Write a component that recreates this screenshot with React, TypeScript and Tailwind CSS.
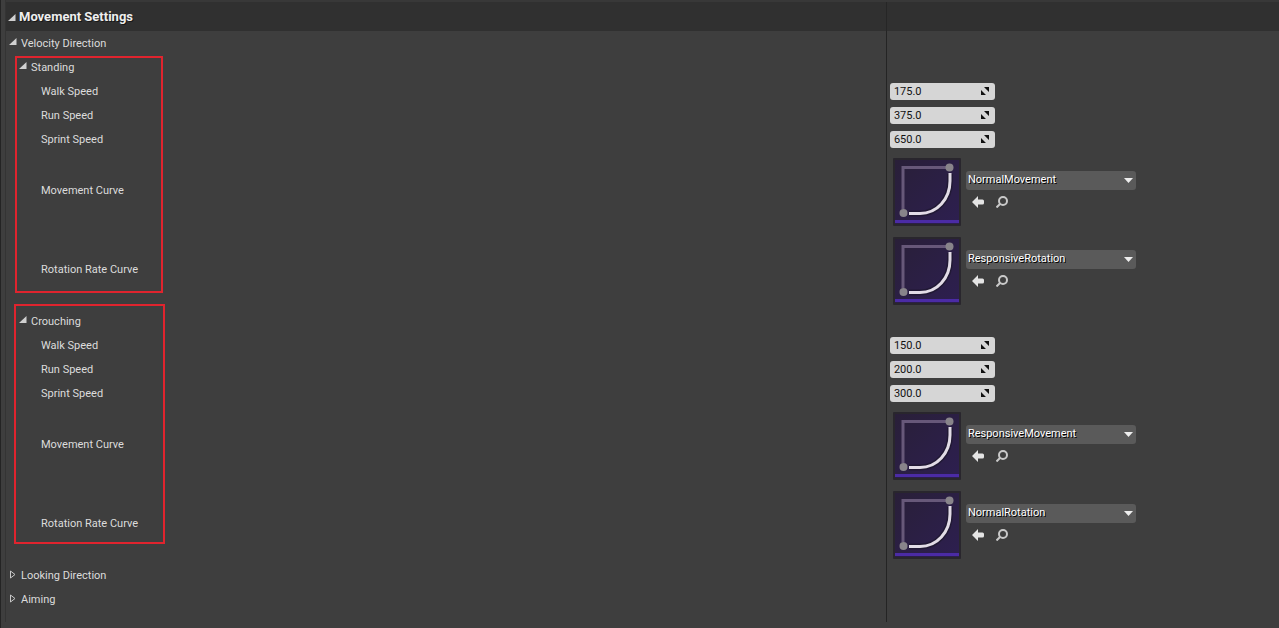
import { ReactNode, useId, useState } from "react";

interface StanceSettings {
  name: string;
  outline: string;
  speeds: { label: string; value: string }[];
  curves: { label: string; asset: string }[];
}

const curveAssets = [
  "NormalMovement",
  "ResponsiveMovement",
  "NormalRotation",
  "ResponsiveRotation",
];

const stances: StanceSettings[] = [
  {
    name: "Standing",
    outline: "left-[9px] top-px bottom-4 w-[148px]",
    speeds: [
      { label: "Walk Speed", value: "175.0" },
      { label: "Run Speed", value: "375.0" },
      { label: "Sprint Speed", value: "650.0" },
    ],
    curves: [
      { label: "Movement Curve", asset: "NormalMovement" },
      { label: "Rotation Rate Curve", asset: "ResponsiveRotation" },
    ],
  },
  {
    name: "Crouching",
    outline: "left-2 -top-[5px] bottom-[19px] w-[151px]",
    speeds: [
      { label: "Walk Speed", value: "150.0" },
      { label: "Run Speed", value: "200.0" },
      { label: "Sprint Speed", value: "300.0" },
    ],
    curves: [
      { label: "Movement Curve", asset: "ResponsiveMovement" },
      { label: "Rotation Rate Curve", asset: "NormalRotation" },
    ],
  },
];

function OpenArrow() {
  return (
    <svg width="8" height="8" viewBox="0 0 8 8" className="shrink-0">
      <path d="M7.500 0v7H0z" fill="#d0d0d0" />
    </svg>
  );
}

function ClosedArrow() {
  return (
    <svg width="8" height="9" viewBox="0 0 8 9" className="shrink-0">
      <path d="M1.500 1v7L6 4.500z" fill="none" stroke="#c8c8c8" />
    </svg>
  );
}

function CurveThumbnail() {
  return (
    <svg width="68" height="68" viewBox="0 0 68 68" className="shrink-0">
      <defs>
        <linearGradient id="thumb" x1="0" y1="0" x2="1" y2="1">
          <stop offset="0" stopColor="#291f38" />
          <stop offset="1" stopColor="#2d1f50" />
        </linearGradient>
      </defs>
      <rect width="68" height="68" rx="1" fill="#29262d" />
      <rect x="2" y="2" width="64" height="64" fill="url(#thumb)" />
      <path d="M10 51V9.500H53" fill="none" stroke="#675879" strokeWidth="3" />
      <path
        d="M57 16v7C57 41 44 55.500 27 55.500H16"
        fill="none"
        stroke="#1b1528"
        strokeWidth="6"
        opacity="0.6"
      />
      <path
        d="M57 15v8C57 41 44 55.500 27 55.500H16"
        fill="none"
        stroke="#e2dce6"
        strokeWidth="3"
      />
      <circle cx="56.500" cy="9.500" r="4" fill="#88848a" />
      <circle cx="10.500" cy="55" r="4" fill="#88848a" />
      <rect x="2" y="62" width="64" height="3" fill="#4b2ba5" />
    </svg>
  );
}

function UseArrowIcon() {
  return (
    <svg width="12" height="12" viewBox="0 0 12 12">
      <path d="M0 6l6-6v3.500h4.500q1.500 0 1.500 1.500v2q0 1.500-1.500 1.500H6V12z" fill="#e4e4e4" />
    </svg>
  );
}

function BrowseIcon() {
  return (
    <svg width="13" height="12" viewBox="0 0 13 12" fill="none" stroke="#c9c9c9">
      <circle cx="7" cy="5" r="4" strokeWidth="2" />
      <path d="M4 8L0.500 11.500" strokeWidth="2" />
    </svg>
  );
}

interface RowProps {
  label: ReactNode;
  indent: string;
  children?: ReactNode;
}

function Row({ label, indent, children }: RowProps) {
  return (
    <div className="grid min-h-6 grid-cols-[69.200%_1fr]">
      <div className={`flex items-center ${indent}`}>{label}</div>
      <div className="flex items-center pl-[3px]">{children}</div>
    </div>
  );
}

function SpeedRow({ label, value }: { label: string; value: string }) {
  const id = useId();
  const [speed, setSpeed] = useState(value);
  return (
    <Row indent="pt-0.5 pl-[35px]" label={<label htmlFor={id}>{label}</label>}>
      <div className="flex h-[17px] w-[105px] items-center rounded-[3px] bg-[#d6d6d6] pr-1.5 pl-1 text-[#111]">
        <input
          id={id}
          type="text"
          value={speed}
          onChange={(e) => setSpeed(e.target.value)}
          className="h-[17px] min-w-0 flex-1 bg-transparent pt-px outline-none"
        />
        <svg width="8" height="8" viewBox="0 0 8 8" className="shrink-0">
          <path d="M3 0H8v5zM0 3V8h5z" fill="#111" />
        </svg>
      </div>
    </Row>
  );
}

function CurveRow({ label, asset }: { label: string; asset: string }) {
  const id = useId();
  const [selected, setSelected] = useState(asset);
  return (
    <Row indent="pl-[35px]" label={<label htmlFor={id}>{label}</label>}>
      <div className="flex items-center gap-[5px] pt-[7px] pb-1 pl-[3px]">
        <CurveThumbnail />
        <div className="flex flex-col gap-1.5 pb-1.5">
          <div className="grid w-[170px] items-center">
            <select
              id={id}
              value={selected}
              onChange={(e) => setSelected(e.target.value)}
              className="col-start-1 row-start-1 h-[19px] appearance-none rounded-[3px] bg-[#5a5a5a] pr-4 pl-0.5 text-white outline-none text-shadow-[1px_1px_0_#000]"
            >
              {curveAssets.map((name) => (
                <option key={name} value={name}>
                  {name}
                </option>
              ))}
            </select>
            <svg
              width="9"
              height="5"
              viewBox="0 0 9 5"
              className="pointer-events-none col-start-1 row-start-1 mr-[3px] justify-self-end"
            >
              <path d="M0 0h9L4.500 5z" fill="#eee" />
            </svg>
          </div>
          <div className="flex gap-3 pl-1.5">
            <button type="button" aria-label="Use selected asset">
              <UseArrowIcon />
            </button>
            <button type="button" aria-label="Browse to asset">
              <BrowseIcon />
            </button>
          </div>
        </div>
      </div>
    </Row>
  );
}

interface CategoryRowProps {
  name: string;
  indent: string;
  open: boolean;
  onToggle: () => void;
}

function CategoryRow({ name, indent, open, onToggle }: CategoryRowProps) {
  return (
    <Row
      indent={`pt-0.5 ${indent}`}
      label={
        <button
          type="button"
          aria-expanded={open}
          onClick={onToggle}
          className="flex items-center gap-1"
        >
          <span className="pb-1">{open ? <OpenArrow /> : <ClosedArrow />}</span>
          {name}
        </button>
      }
    />
  );
}

function StanceGroup({ stance }: { stance: StanceSettings }) {
  const [open, setOpen] = useState(true);
  return (
    <section className="relative">
      <CategoryRow
        name={stance.name}
        indent="pl-[13px]"
        open={open}
        onToggle={() => setOpen(!open)}
      />
      {open && (
        <>
          {stance.speeds.map((data) => (
            <SpeedRow key={data.label} {...data} />
          ))}
          {stance.curves.map((data) => (
            <CurveRow key={data.label} {...data} />
          ))}
          <div
            className={`pointer-events-none absolute border-2 border-[#e0242e] ${stance.outline}`}
          />
        </>
      )}
    </section>
  );
}

export default function App() {
  const [open, setOpen] = useState(true);
  const [velocityOpen, setVelocityOpen] = useState(true);
  const [lookingOpen, setLookingOpen] = useState(false);
  const [aimingOpen, setAimingOpen] = useState(false);

  return (
    <main className="min-h-screen border-l border-[#242424] bg-[#3e3e3e] font-['Roboto',sans-serif] text-[11px] leading-4 text-[#dcdcdc]">
      <div className="ml-1 border-l border-[#343434]">
        <header className="grid h-[31px] grid-cols-[69.200%_1fr] border-t-2 border-[#383838] bg-[#303030]">
          <h1 className="flex items-center border-r border-[#262626] pl-0.5">
            <button
              type="button"
              aria-expanded={open}
              onClick={() => setOpen(!open)}
              className="flex items-center gap-[3px] text-[13px] font-bold text-[#eeeeee] text-shadow-[1px_1px_0_#181818]"
            >
              <span className="pt-0.5">
                <OpenArrow />
              </span>
              Movement Settings
            </button>
          </h1>
        </header>
        {open && (
          <div className="bg-[linear-gradient(#242424,#242424)] bg-[length:1px_100%] bg-[position:69.200%_0] bg-no-repeat pb-[11px]">
            <CategoryRow
              name="Velocity Direction"
              indent="pl-[3px]"
              open={velocityOpen}
              onToggle={() => setVelocityOpen(!velocityOpen)}
            />
            {velocityOpen &&
              stances.map((stance) => (
                <StanceGroup key={stance.name} stance={stance} />
              ))}
            <CategoryRow
              name="Looking Direction"
              indent="pl-[3px]"
              open={lookingOpen}
              onToggle={() => setLookingOpen(!lookingOpen)}
            />
            <CategoryRow
              name="Aiming"
              indent="pl-[3px]"
              open={aimingOpen}
              onToggle={() => setAimingOpen(!aimingOpen)}
            />
          </div>
        )}
      </div>
    </main>
  );
}
